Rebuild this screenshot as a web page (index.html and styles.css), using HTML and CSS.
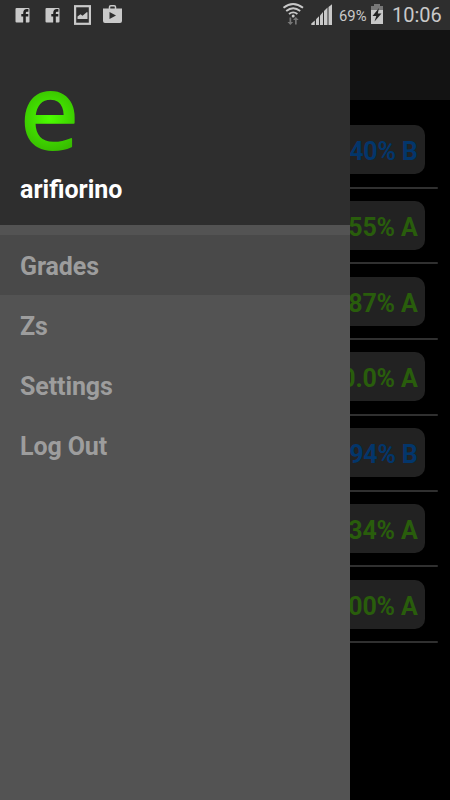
FILE: index.html
```html
<!DOCTYPE html>
<html lang="en">
<head>
<meta charset="utf-8">
<title>Grades</title>
<link rel="stylesheet" href="styles.css">
</head>
<body>
<header class="status">
  <svg class="status-left" width="124" height="30" viewBox="0 0 124 30">
    <g fill="#c9c9c9">
      <rect x="15.5" y="8" width="14" height="14.5" rx="1"/>
      <rect x="45.500" y="8" width="14" height="14.5" rx="1"/>
    </g>
    <g fill="none" stroke="#222" stroke-width="2.600">
      <path d="M24.500 23V13q0-2.600 2.400-2.600h1.500M21.300 15.300h7"/>
      <path d="M54.500 23V13q0-2.600 2.400-2.600h1.500M51.300 15.300h7"/>
    </g>
    <rect x="75.100" y="6.200" width="14.800" height="17.600" fill="none" stroke="#c9c9c9" stroke-width="2.200"/>
    <path fill="#c9c9c9" d="M77.500 19v-2.500l3-2.200 2 1.500 4.500-3.800.500.500V19z"/>
    <path fill="none" stroke="#c9c9c9" stroke-width="1.500" d="M109.500 9V7q0-1.300 1.300-1.300h3.400q1.300 0 1.300 1.300v2"/>
    <path fill="#c9c9c9" fill-rule="evenodd" d="M103 8.500h19V21q0 2-2 2h-15q-2 0-2-2zM109.500 12v7l6.500-3.500z"/>
  </svg>
  <div class="status-right">
    <svg width="52" height="30" viewBox="0 0 52 30">
      <g fill="none" stroke="#c9c9c9" stroke-width="1.900">
        <path d="M1.500 7.800q9.500-7.600 19.500 0"/>
        <path d="M4.200 11q7-5.600 14 0"/>
        <path d="M7 14q4.200-3.200 8.400 0"/>
      </g>
      <circle cx="11.200" cy="16" r="1.500" fill="#c9c9c9"/>
      <g fill="#777">
        <path d="M7.500 17.500h1.700v4.500h2l-2.850 3-2.850-3h2z"/>
        <path d="M13 24.500h1.700V20h2l-2.850-3L11 20h2z"/>
      </g>
      <g fill="#c9c9c9">
        <path d="M29.300 25v-1.500l3.500-3V25z"/>
        <path d="M34 25v-5.700l3-3V25z"/>
        <path d="M38 25v-9.500l3-3.500V25z"/>
        <path d="M42 25V11l3.500-3.500V25z"/>
        <path d="M46.500 25V7L50 4.200V25z"/>
      </g>
    </svg>
    <span class="percent">69%</span>
    <svg class="battery" width="14" height="30" viewBox="0 0 14 30">
      <path fill="#777" d="M4 4h6v2h3v5H1V6h3z"/>
      <path fill="#c9c9c9" d="M1 10h12v14H1z"/>
      <path fill="#242424" d="M9 8l-6.500 8h3.800L4.500 21.500l7-8H7.800z"/>
    </svg>
    <time class="clock">10:06</time>
  </div>
</header>
<div class="app">
  <nav class="drawer">
    <div class="profile">
      <svg class="logo" width="100" height="100" viewBox="0 0 100 100">
        <defs>
          <radialGradient id="glow" gradientUnits="userSpaceOnUse" cx="28" cy="-29" r="34">
            <stop offset="0" stop-color="#4cff00"/>
            <stop offset="1" stop-color="#36b800"/>
          </radialGradient>
        </defs>
        <text class="logo-letter" transform="translate(-.3 79) scale(1.070 1.060)" fill="url(#glow)" stroke="url(#glow)">e</text>
      </svg>
      <div class="name">arifiorino</div>
    </div>
    <ul class="menu">
      <li class="item selected">Grades</li>
      <li class="item">Zs</li>
      <li class="item">Settings</li>
      <li class="item">Log Out</li>
    </ul>
  </nav>
  <main class="page">
    <div class="toolbar"></div>
    <div class="grades">
      <div class="row"><div class="grade b">40% B</div></div>
      <div class="row"><div class="grade">55% A</div></div>
      <div class="row"><div class="grade">87% A</div></div>
      <div class="row"><div class="grade">0.0% A</div></div>
      <div class="row"><div class="grade b">94% B</div></div>
      <div class="row"><div class="grade">34% A</div></div>
      <div class="row"><div class="grade">00% A</div></div>
    </div>
  </main>
</div>
</body>
</html>
```
FILE: styles.css
```css
* { box-sizing: border-box; }

body {
  margin: 0;
  height: 800px;
  display: flex;
  flex-direction: column;
  overflow: hidden;
  background: #000;
  font-family: Roboto, sans-serif;
}

.status {
  height: 30px;
  flex: none;
  display: flex;
  justify-content: space-between;
  background: #2e2e2e;
  color: #c9c9c9;
}

.status svg { display: block; flex: none; }

.status-right {
  display: flex;
  width: 168px;
  line-height: 31px;
  white-space: nowrap;
}

.percent { width: 30px; margin-left: 5px; font-size: 14.8px; line-height: 32px; }
.battery { margin-left: 1px; }
.clock { margin-left: 8px; font-size: 20px; }

.app { flex: 1; display: flex; }

.drawer {
  width: 350px;
  flex: none;
  background: #535353;
}

.profile {
  height: 195px;
  padding: 40px 20px 0;
  background: #2e2e2e;
}

.logo { display: block; overflow: visible; }

.logo-letter {
  font-family: "Open Sans", sans-serif;
  font-size: 99px;
  stroke-width: 1.7px;
  stroke-linejoin: round;
}

.name {
  height: 38px;
  line-height: 39px;
  color: #fff;
  font-size: 25px;
  font-weight: 700;
}

.menu {
  list-style: none;
  margin: 0;
  padding: 10px 0 0;
}

.item {
  height: 60px;
  padding-left: 20px;
  line-height: 63px;
  color: #9d9d9d;
  font-size: 25px;
  font-weight: 700;
  letter-spacing: -0.1px;
}

.selected { background: #494949; }

.page {
  width: 100px;
  overflow: hidden;
  box-shadow: inset 5px 0 5px -4px #000;
}

.toolbar { height: 70px; background: #131313; }

.grades { padding: 25px 12px 0 0; }

.row {
  height: 75.8px;
  display: flex;
  flex-direction: column;
  align-items: flex-end;
}

.row::after {
  content: "";
  width: 100%;
  height: 2px;
  margin-top: 12.500px;
  background: #303030;
  border-radius: 0 1px 1px 0;
}

.grade {
  height: 49px;
  width: 150px;
  margin-right: 13px;
  padding-right: 7.5px;
  border-radius: 10px;
  background: #222;
  color: #295d0c;
  line-height: 53px;
  text-align: right;
  font-size: 25px;
  font-weight: 700;
  letter-spacing: -0.2px;
}

.b { color: #03366b; }
```
